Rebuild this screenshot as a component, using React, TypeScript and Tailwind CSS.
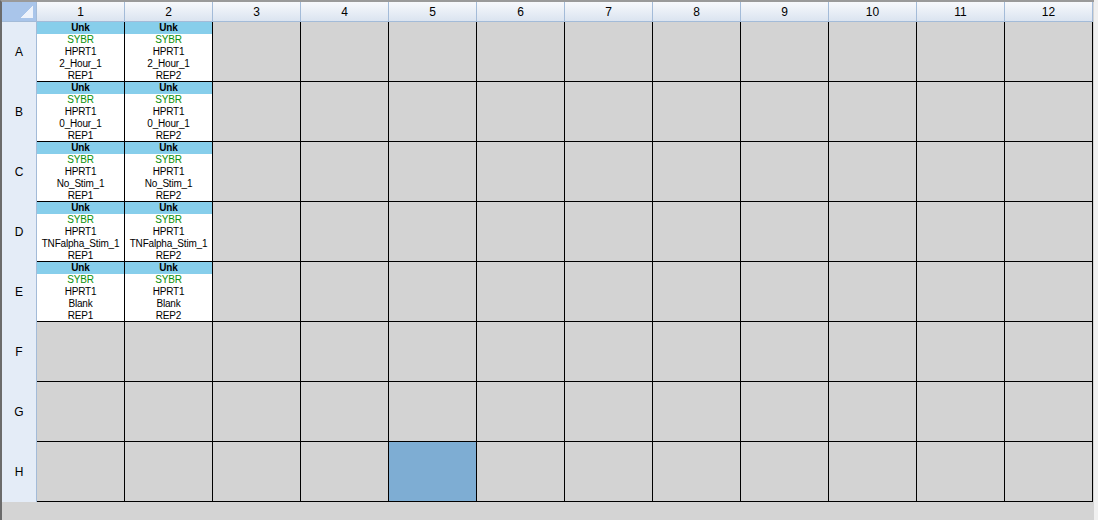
import React from 'react';

// plate layout: rows A-H, columns 1-12
const rows = ['A', 'B', 'C', 'D', 'E', 'F', 'G', 'H'];
const cols = Array.from({ length: 12 }, (_, i) => i + 1);

interface Well {
  task: string;
  dye: string;
  target: string;
  sample: string;
  rep: string;
}

const samples: Record<string, string> = {
  A: '2_Hour_1',
  B: '0_Hour_1',
  C: 'No_Stim_1',
  D: 'TNFalpha_Stim_1',
  E: 'Blank',
};

function getWell(row: string, col: number): Well | null {
  const sample = samples[row];
  if (!sample || col > 2) return null;
  return { task: 'Unk', dye: 'SYBR', target: 'HPRT1', sample, rep: `REP${col}` };
}

function WellCell({ row, col }: { row: string; col: number }) {
  const well = getWell(row, col);
  const selected = row === 'H' && col === 5;

  if (!well) {
    return (
      <div
        className={`border-r border-b border-black ${
          selected ? 'bg-[#7eadd3] border-[#0f2a44]' : 'bg-[#d3d3d3]'
        }`}
      />
    );
  }

  return (
    <div className="flex flex-col border-r border-b border-black bg-white text-[10px] leading-[12px] tracking-[-0.2px] text-black text-center overflow-hidden whitespace-nowrap">
      <div className="h-[12px] shrink-0 leading-[12px] bg-[#87ceeb] font-bold">{well.task}</div>
      <div className="shrink-0 text-[#0b8f0b]">{well.dye}</div>
      <div className="shrink-0">{well.target}</div>
      <div className="shrink-0">{well.sample}</div>
      <div className="shrink-0">{well.rep}</div>
    </div>
  );
}

export default function App() {
  return (
    <div
      className="flex w-[1098px] h-[520px] bg-[#d4d4d4]"
      style={{ fontFamily: '"Liberation Sans", Arial, sans-serif' }}
    >
      <div className="flex-1 border-l-2 border-t-2 border-l-[#6b6b6b] border-t-[#9a9a9a]">
        <div className="grid grid-cols-[35px_repeat(12,88px)] grid-rows-[20px_repeat(8,60px)] w-max">
          {/* corner */}
          <div className="relative border-r border-b border-[#a3bbd8] bg-[#a9c5ea]">
            <div className="absolute right-[3px] bottom-[3px] w-[12px] h-[12px] bg-gradient-to-br from-transparent from-50% to-[#eef3fb] to-50%" />
          </div>
          {cols.map((c) => (
            <div
              key={c}
              className="flex items-center justify-center border-r border-b border-[#a3bbd8] bg-gradient-to-b from-[#f7f9fc] to-[#dbe4f0] text-[12px] text-black"
            >
              {c}
            </div>
          ))}
          {rows.map((r) => (
            <React.Fragment key={r}>
              <div className="flex items-center justify-center border-r border-[#a3bbd8] bg-[#e4ecf7] text-[12px] text-black last:border-b">
                {r}
              </div>
              {cols.map((c) => (
                <WellCell key={c} row={r} col={c} />
              ))}
            </React.Fragment>
          ))}
        </div>
      </div>
      <div className="w-[4px] bg-[#f0f0f0]" />
    </div>
  );
}
